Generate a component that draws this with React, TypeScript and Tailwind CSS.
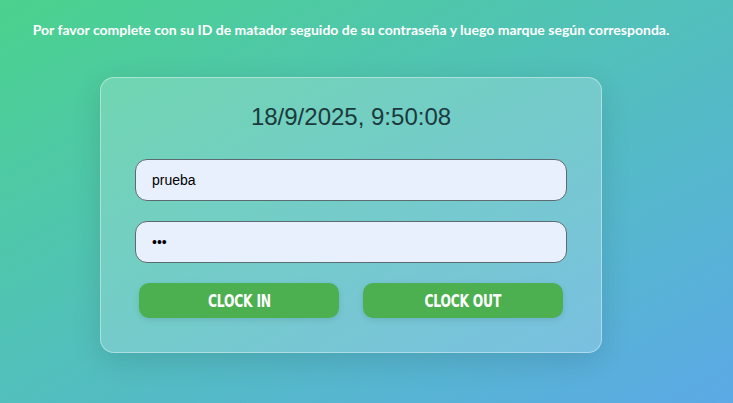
import React from 'react';

const App: React.FC = () => {
  return (
    <div className="w-[733px] h-[403px] overflow-hidden bg-gradient-to-br from-[#4bd28c] to-[#5ca9e6]">
      <div className="w-[702px] flex flex-col items-center pt-[21px]">
        <p className="text-white font-bold text-[14px] leading-[18px] font-['Lato','Open_Sans',sans-serif]">
          Por favor complete con su ID de matador seguido de su contraseña y luego marque según corresponda.
        </p>

        <div className="mt-[38px] w-[502px] rounded-[14px] border border-white/40 bg-white/20 shadow-[0_8px_30px_rgba(0,0,0,0.12)] px-[34px] pt-[24px] pb-[34px]">
          <div className="text-center text-[24px] leading-[30px] text-[#1b3a3d] font-['Liberation_Sans',Arial,sans-serif]">
            18/9/2025, 9:50:08
          </div>

          <div className="mt-[27px] flex flex-col gap-[20px]">
            <input
              type="text"
              defaultValue="prueba"
              className="h-[42px] w-full rounded-[12px] border border-[#5b6b70] bg-[#e8f0fe] px-[16px] text-[14px] text-black outline-none font-['Liberation_Sans',Arial,sans-serif]"
            />
            <input
              type="password"
              defaultValue="abc"
              className="h-[42px] w-full rounded-[12px] border border-[#5b6b70] bg-[#e8f0fe] px-[16px] text-[14px] text-black outline-none font-['Liberation_Sans',Arial,sans-serif]"
            />
          </div>

          <div className="mt-[20px] flex justify-center gap-[24px]">
            {['CLOCK IN', 'CLOCK OUT'].map((label) => (
              <button
                key={label}
                className="h-[35px] w-[200px] rounded-[10px] bg-[#4caf50] text-white shadow-[0_2px_6px_rgba(0,0,0,0.1)] flex items-center justify-center"
              >
                <span className="inline-block scale-x-[0.74] text-[18.5px] font-bold tracking-[-0.3px] font-['DejaVu_Sans_Condensed',sans-serif]">
                  {label}
                </span>
              </button>
            ))}
          </div>
        </div>
      </div>
    </div>
  );
};

export default App;
